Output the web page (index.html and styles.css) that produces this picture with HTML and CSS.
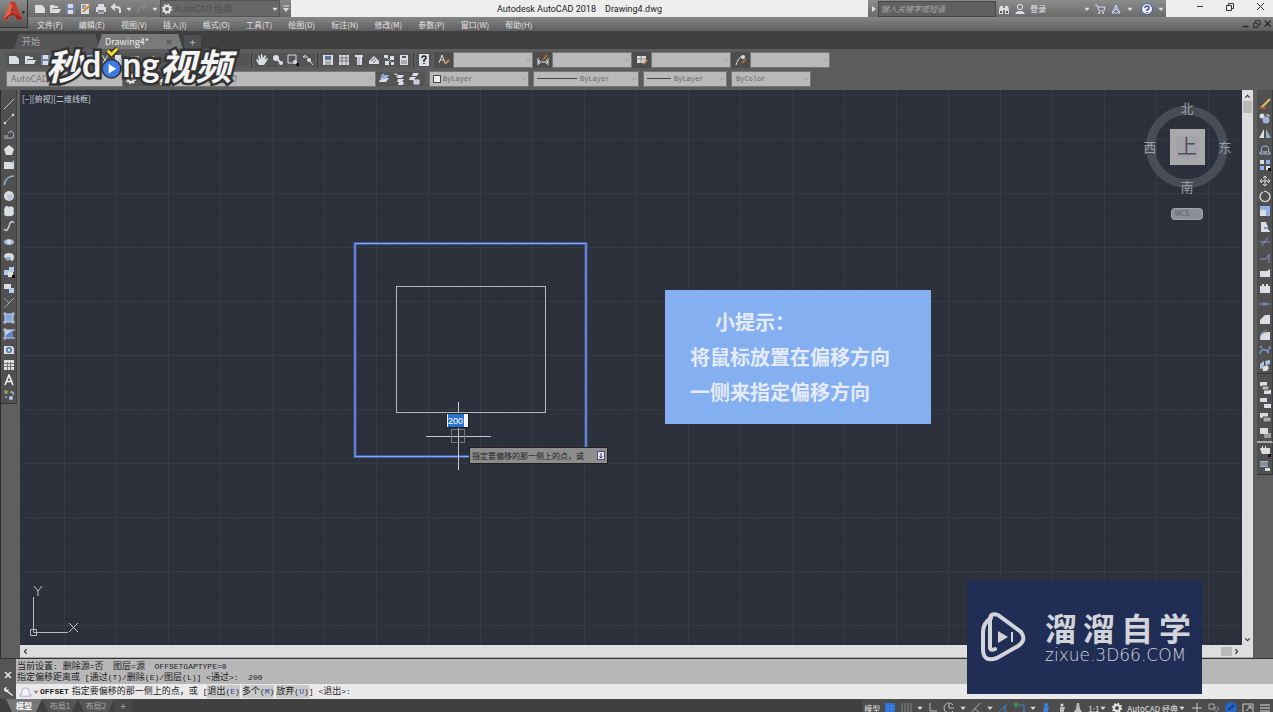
FILE: index.html
```html
<!DOCTYPE html>
<html lang="zh-CN">
<head>
<meta charset="utf-8">
<title>Autodesk AutoCAD 2018 Drawing4.dwg</title>
<link rel="stylesheet" href="styles.css">
</head>
<body>
<div class="app">
  <header class="header">
    <button class="app-button" aria-label="应用程序菜单">
      <svg viewBox="0 0 28 30"><path d="M3 21 10 2h5l8 19h-6l-2-5-6 1-2 4z" fill="#c53a2b"/><path d="m3 21 7-19 2 5-4 14z" fill="#e5624b"/><path d="m11 12 1-5 2 5z" fill="#555"/><path d="M3 21h4l2-4 6-1 2 5h6l-2-3-8-4-6 3z" fill="#9d2620"/><path d="M22 12h4l-2 3z" fill="#222"/></svg>
    </button>
    <div class="header-rows">
      <div class="titlebar">
        <div class="quick">
          <div class="icons quick-icons" data-icons="new open save saveas print undo caret redo caret"></div>
          <div class="workspace">
            <svg class="ico"><use href="#i-gear"/></svg>
            <select aria-label="工作空间"><option>AutoCAD 经典</option></select>
            <svg class="ico small"><use href="#i-caret"/></svg>
          </div>
          <div class="icons" data-icons="more"></div>
        </div>
        <h1 class="title"><span>Autodesk AutoCAD 2018</span><span>Drawing4.dwg</span></h1>
        <div class="info">
          <button class="play" aria-label="展开"><svg class="ico"><use href="#i-right"/></svg></button>
          <input class="search" type="text" placeholder="键入关键字或短语" aria-label="搜索">
          <div class="icons info-icons" data-icons="binoc user"></div>
          <button class="login">登录</button>
          <div class="icons info-icons" data-icons="caret cart cloud caret help caret"></div>
        </div>
        <div class="win">
          <button aria-label="最小化"><svg class="ico"><path d="M3 5.500h6" stroke="#333" fill="none"/></svg></button>
          <button aria-label="还原"><svg class="ico"><path d="M2.500 4.500h5v5h-5zM4.500 4V2.500h5v5H8" stroke="#333" fill="none"/></svg></button>
          <button aria-label="关闭"><svg class="ico"><path d="m3 2 7 7m0-7-7 7" stroke="#333" fill="none"/></svg></button>
        </div>
      </div>
      <nav class="menubar">
        <button>文件(F)</button><button>编辑(E)</button><button>视图(V)</button><button>插入(I)</button><button>格式(O)</button><button>工具(T)</button><button>绘图(D)</button><button>标注(N)</button><button>修改(M)</button><button>参数(P)</button><button>窗口(W)</button><button>帮助(H)</button>
        <div class="doc-win icons" data-icons="dmin drest dclose"></div>
      </nav>
    </div>
  </header>

  <div class="tabs">
    <button class="tab">开始</button>
    <button class="tab active"><span>Drawing4*</span><svg class="ico small"><use href="#i-x"/></svg></button>
    <button class="tab-add" aria-label="新图形">+</button>
  </div>

  <div class="toolbars">
    <div class="bar">
      <div class="icons std files" data-icons="new open save print preview publish cut copy paste brush undo caret redo caret"></div>
      <i class="sep"></i>
      <div class="icons std" data-icons="hand zoom zoomwin zoomprev"></div>
      <i class="sep"></i>
      <div class="icons std" data-icons="props dcenter palette sheet markup calc"></div>
      <i class="sep"></i>
      <div class="icons std" data-icons="ask"></div>
      <div class="style-set">
        <div class="icons" data-icons="textstyle"></div><span class="combo w80"><select aria-label="文字样式"><option></option></select><svg class="chev"><use href="#i-chev"/></svg></span>
        <div class="icons" data-icons="dimstyle"></div><span class="combo w80"><select aria-label="标注样式"><option></option></select><svg class="chev"><use href="#i-chev"/></svg></span>
        <div class="icons" data-icons="tabstyle"></div><span class="combo w80"><select aria-label="表格样式"><option></option></select><svg class="chev"><use href="#i-chev"/></svg></span>
        <div class="icons" data-icons="leader"></div><span class="combo w80"><select aria-label="多重引线样式"><option></option></select><svg class="chev"><use href="#i-chev"/></svg></span>
      </div>
    </div>
    <div class="bar second">
      <span class="combo w116 ws"><select aria-label="工作空间"><option>AutoCAD 经典</option></select></span>
      <div class="icons std" data-icons="gear layers layerst"></div>
      <span class="combo w206 layer"><svg class="ico"><use href="#i-bulb"/></svg><svg class="ico"><use href="#i-sun"/></svg><svg class="ico"><use href="#i-lock"/></svg><i class="swatch"></i><select aria-label="图层"><option>0</option></select><svg class="chev"><use href="#i-chev"/></svg></span>
      <div class="icons std layer-tools" data-icons="layers layerst layerprev"></div>
      <span class="combo w100"><i class="swatch"></i><select aria-label="颜色"><option>ByLayer</option></select><svg class="chev"><use href="#i-chev"/></svg></span>
      <span class="combo w106"><i class="rule long"></i><select aria-label="线型"><option>ByLayer</option></select><svg class="chev"><use href="#i-chev"/></svg></span>
      <span class="combo w84"><i class="rule"></i><select aria-label="线宽"><option>ByLayer</option></select><svg class="chev"><use href="#i-chev"/></svg></span>
      <span class="combo w80"><select aria-label="打印样式"><option>ByColor</option></select><svg class="chev"><use href="#i-chev"/></svg></span>
    </div>
  </div>

  <main class="main">
    <aside class="side left">
      <div class="vtools draw" data-icons="line xline pline polygon rect arc circle cloudrev spline ellipse earc insert block point hatch gradient region table text addsel"></div>
    </aside>
    <section class="work">
      <div class="canvas-row">
        <div class="canvas">
          <button class="view-label">[−][俯视][二维线框]</button>
          <svg class="drawing" width="640" height="400">
            <rect x="335" y="153.500" width="231" height="213" fill="none" stroke="#3d5dad" stroke-width="3"/>
            <rect x="335" y="153.500" width="231" height="213" fill="none" stroke="#91a6e6"/>
            <rect x="376.500" y="196.500" width="149" height="126" fill="none" stroke="#b4b8bf"/>
            <path d="M406 346.500h65M438.500 312v68" stroke="#c3c6cb" fill="none"/>
            <rect x="431.500" y="339.500" width="13" height="13" fill="none" stroke="#747982"/>
          </svg>
          <label class="dist"><input type="text" value="200" aria-label="偏移距离"></label>
          <div class="prompt"><span>指定要偏移的那一侧上的点，或</span><svg viewBox="0 0 8 9"><rect x=".5" y=".5" width="7" height="8" fill="#e6e8f4" stroke="#4b5078"/><path d="M4 2v5M2.500 5.500 4 7l1.500-1.500" stroke="#333860" fill="none"/></svg></div>
          <div class="hint"><p class="lead">小提示：</p><p>将鼠标放置在偏移方向</p><p>一侧来指定偏移方向</p></div>
          <svg class="cube" width="96" height="128">
            <circle cx="48" cy="51" r="36.500" fill="none" stroke="#484d58" stroke-width="9"/>
            <rect x="31" y="33" width="35" height="36" fill="#a9a9ab"/><rect x="37" y="40" width="23" height="23" fill="#a2a4a9"/>
            <text x="48" y="58" class="cube-top">上</text>
            <text x="48" y="17">北</text><text x="11" y="56">西</text><text x="86" y="56">东</text><text x="48" y="96">南</text>
            <rect x="32.500" y="112.500" width="31" height="11" rx="3" fill="#8d8f99" stroke="#a2a4ac"/>
            <text x="43" y="120" class="wcs">WCS</text>
          </svg>
          <svg class="ucs" width="64" height="56"><path d="M11.500 44V12M14 47.500h32M8.500 44.500h6v6h-6zM11.500 44v3.500H14" fill="none" stroke="#b4b8bf"/><path d="m12 1 4 5 4-5m-4 5v5M47 38l9 9m0-9-9 9" fill="none" stroke="#c3c6cb"/></svg>
        </div>
        <div class="vscroll"><svg class="arrow" viewBox="0 0 8 8"><path d="m2 5 2-2 2 2"/></svg><i class="thumb"></i><svg class="arrow end" viewBox="0 0 8 8"><path d="m2 3 2 2 2-2"/></svg></div>
      </div>
      <div class="hscroll"><svg class="arrow" viewBox="0 0 8 8"><path d="M5 2 3 4l2 2"/></svg><i class="thumb"></i><svg class="arrow" viewBox="0 0 8 8"><path d="m3 2 2 2-2 2"/></svg></div>
    </section>
    <aside class="side right">
      <div class="vtools modify" data-icons="erase copyobj mirror offset array move rotate scale stretch trim extend brk brk2 join chamfer fillet blend explode"></div>
      <div class="vtools order" data-icons="front back above under"></div>
      <div class="vtools annot" data-icons="annofront hatchback"></div>
    </aside>
  </main>

  <section class="command">
    <div class="handle"><svg class="ico"><path d="m3 3 6 6m0-6-6 6" stroke="#eee" stroke-width="1.500"/></svg><svg class="ico"><path d="M2 5a3 3 0 0 1 3-3L4 4l1 1 2-1a3 3 0 0 1-1 2l5 4-1 1-5-4a3 3 0 0 1-3-2z" fill="#eee"/></svg></div>
    <div class="console">
      <div class="history">
        <p><b>当前设置</b>: <b>删除源</b>=<b>否</b>&nbsp; <b>图层</b>=<b>源</b>&nbsp; OFFSETGAPTYPE=0</p>
        <p><b>指定偏移距离或</b> [<b>通过</b>(T)/<b>删除</b>(E)/<b>图层</b>(L)] &lt;<b>通过</b>&gt;:&nbsp; 200</p>
      </div>
      <div class="entry">
        <svg class="offset-icon" viewBox="0 0 14 12"><path d="M1 10.500h12v-2h-2v-3a4 4 0 0 0-8 0v3H1z" fill="#f8f8ff" stroke="#a3a8d8"/></svg>
        <svg class="ico small"><use href="#i-caretgray"/></svg>
        <strong>OFFSET</strong>
        <span class="ask"><b>指定要偏移的那一侧上的点，或</b> [</span>
        <button class="opt"><b>退出</b>(<em>E</em>)</button><button class="opt"><b>多个</b>(<em>M</em>)</button><button class="opt"><b>放弃</b>(<em>U</em>)</button><span>] &lt;<b>退出</b>&gt;:</span>
      </div>
    </div>
  </section>

  <footer class="status">
    <div class="layouts"><button class="layout on">模型</button><button class="layout">布局1</button><button class="layout">布局2</button><button class="layout add">+</button></div>
    <div class="modes">
      <button class="mode-text">模型</button>
      <div class="icons" data-icons="gridon grid caret ortho polar caret iso caret otrack osnap caret annovis annoauto annoscale"></div>
      <button class="mode-text">1:1<svg class="ico small"><use href="#i-caret"/></svg></button>
      <div class="icons" data-icons="gear"></div>
      <button class="mode-text">AutoCAD 经典<svg class="ico small"><use href="#i-caret"/></svg></button>
      <div class="icons extras" data-icons="plus isolate hw full burger"></div>
    </div>
  </footer>

  <div class="video-logo"><span class="han">秒</span><span class="lat">d</span><svg viewBox="0 0 22 34"><path d="M7 3l4 4 6-6" fill="none" stroke="#333" stroke-width="6"/><path d="M7 3l4 4 6-6" fill="none" stroke="#f2df2c" stroke-width="3"/><circle cx="11" cy="22" r="10.500" fill="#333"/><circle cx="11" cy="22" r="9" fill="#3c7be6"/><path d="m8 17 8 5-8 5z" fill="#fff"/></svg><span class="lat">ng</span><span class="han">视频</span></div>

  <div class="site-logo">
    <svg viewBox="0 0 48 50"><path d="M11 6q-8 5-8 14v17q0 14 14 9l21-12q9-6 3-14L18 3q-8-3-8 5v28q1 3 5 1" fill="none" stroke="#d3d4da" stroke-width="4" stroke-linecap="round"/><path d="m18 19 10 6-10 6z" fill="#d3d4da"/><path d="M32 20v10" stroke="#d3d4da" stroke-width="2"/></svg>
    <div class="site-name"><div class="site-han"><span>溜</span><span>溜</span><span>自</span><span>学</span></div><div class="site-url">zixue.3D66.COM</div></div>
  </div>
</div>
<script src="script.js"></script>
</body>
</html>
```

FILE: styles.css
```css
* { box-sizing: border-box; }
body { margin: 0; background: #5b5b5b; font-family: "Noto Sans CJK SC", "Open Sans", sans-serif; font-size: 8px; color: #ddd; }
button, select, input { font: inherit; color: inherit; background: none; border: 0; padding: 0; margin: 0; border-radius: 0; outline: 0; }
select { appearance: none; }
h1 { font-weight: normal; }
p, h1 { margin: 0; }
b, em { font-style: normal; font-weight: normal; }
.app { position: relative; display: flex; flex-direction: column; height: 100vh; overflow: hidden; }
.ico { display: block; width: 12px; height: 12px; flex: none; }
.ico.small { width: 8px; height: 8px; }
.icons { display: flex; align-items: center; }
.icons button { display: flex; align-items: center; justify-content: center; width: 16px; height: 14px; }
.icons .i-caret { width: 11px; }
.icons .i-caret svg { width: 8px; height: 8px; }

/* title and menus */
.header { display: flex; flex: none; height: 31px; background: #666; }
.app-button { width: 28px; height: 28px; background: linear-gradient(#8c8c8c, #555); border-right: 1px solid #333; border-bottom: 1px solid #333; }
.app-button svg { display: block; width: 28px; height: 28px; }
.header-rows { flex: 1; display: flex; flex-direction: column; min-width: 0; }
.titlebar { display: flex; height: 17px; background: #ededed; }
.quick { display: flex; align-items: center; background: linear-gradient(#868686, #696969); padding-left: 4px; width: 263px; }
.quick-icons { width: 128px; }
.workspace { display: flex; align-items: center; width: 120px; height: 17px; background: #686868; color: #505050; border: 1px solid #555; gap: 2px; }
.workspace select { flex: 1; font-size: 9px; }
.quick .icons:last-child button { width: 11px; }
.title { flex: 1; display: flex; justify-content: center; align-items: center; gap: 9px; font-family: Roboto, sans-serif; font-size: 9px; color: #222; }
.info { display: flex; align-items: center; width: 298px; background: linear-gradient(#8c8c8c, #6a6a6a); }
.play { width: 10px; }
.search { width: 120px; height: 16px; background: #606060; border: 1px solid #484848; padding-left: 2px; }
.search::placeholder { color: #a5a5a5; opacity: 1; font-style: italic; }
.login { color: #e8e8e8; width: 20px; margin-right: 33px; }
.info-icons .i-help { margin-left: 4px; }
.win { display: flex; align-items: center; justify-content: space-between; width: 107px; padding: 0 7px 4px 28px; }
.menubar { display: flex; align-items: center; gap: 16px; height: 14px; padding-left: 9px; background: linear-gradient(#858585, #5e5e5e); color: #e3e3e3; }
.menubar > button { white-space: nowrap; }
.doc-win { margin-left: auto; }
.doc-win button { width: 11px; }
.doc-win svg { width: 10px; height: 10px; }

/* document tabs */
.tabs { display: flex; align-items: flex-end; flex: none; height: 18px; background: #404040; padding-left: 14px; font-size: 9px; }
.tab { display: flex; align-items: center; justify-content: space-between; width: 86px; height: 15px; padding: 0 10px 0 8px; background: #555; color: #aaa; clip-path: polygon(5px 0, 81px 0, 86px 100%, 0 100%); }
.tab.active { background: #7a7a7a; color: #eee; margin-left: -3px; }
.tab-add { width: 17px; height: 14px; margin-left: 1px; background: #505050; border-radius: 3px; color: #bbb; font-size: 11px; line-height: 12px; }

/* toolbars */
.toolbars { flex: none; height: 41px; padding-top: 2px; background: #5c5c5c; }
.bar { display: flex; align-items: center; height: 18px; padding-left: 6px; }
.bar.second { height: 19px; }
.std { background: #545454; }
.std button { width: 15px; }
.std .i-new, .std .i-hand, .std .i-props { width: 16px; }
.files { width: 243px; }
.files .i-undo { margin-left: 22px; }
.sep { width: 1px; height: 15px; background: #393939; margin: 0 2px; }
.style-set { display: flex; align-items: center; margin-left: 3px; }
.style-set .icons button { width: 19px; height: 16px; background: #4d4d4d; }
.combo { display: flex; align-items: center; flex: none; height: 16px; background: #b9b9b9; border: 1px solid #777; color: #666; padding-left: 2px; font-family: "Liberation Mono", monospace; font-size: 7px; }
.combo select { flex: 1; min-width: 0; height: 14px; padding-left: 2px; }
.combo + .combo { margin-left: 4px; }
.w80 { width: 80px; }
.w84 { width: 84px; }
.w100 { width: 100px; }
.w106 { width: 106px; }
.w116 { width: 117px; }
.w206 { width: 206px; margin-left: 2px; }
.ws, .layer { font-family: "Noto Sans CJK SC", sans-serif; font-size: 9px; color: #777; }
.layer { padding-left: 6px; gap: 2px; }
.chev { width: 8px; height: 8px; flex: none; }
.swatch { width: 8px; height: 8px; background: #eee; border: 1px solid #444; flex: none; margin-left: 1px; }
.rule { width: 24px; height: 1px; background: #444; margin: 0 1px; flex: none; }
.rule.long { width: 40px; }
.layer-tools { padding: 0 4px 0 0; margin-right: 4px; }

/* work area */
.main { flex: 1; display: flex; min-height: 0; }
.side { flex: none; background: #5f5f5f; }
.left { width: 20px; border-left: 1px solid #2d2d2d; }
.right { width: 20px; padding-left: 4px; }
.vtools { display: flex; flex-direction: column; width: 16px; background: #505050; border-right: 1px solid #3d3d3d; }
.vtools button { flex: 1; display: flex; align-items: center; justify-content: center; min-height: 0; }
.draw { height: 314px; padding-top: 6px; border-bottom: 1px solid #333; }
.modify { height: 284px; padding-top: 6px; border-bottom: 1px solid #333; }
.order { height: 69px; padding-top: 6px; border-bottom: 2px solid #aaa; }
.annot { height: 32px; border-bottom: 1px solid #333; }
.work { flex: 1; display: flex; flex-direction: column; min-width: 0; }
.canvas-row { flex: 1; display: flex; min-height: 0; }
.canvas {
  position: relative; flex: 1; overflow: hidden; background-color: #2b303b;
  background-image: linear-gradient(90deg, #363b46 1px, transparent 1px), linear-gradient(#363b46 1px, transparent 1px), linear-gradient(90deg, #2e333e 1px, transparent 1px), linear-gradient(#2e333e 1px, transparent 1px);
  background-size: 52px 54px, 52px 54px, 10px 11px, 10px 11px;
  background-position: 44px 49px, 44px 49px, 4px 5px, 4px 5px;
}
.view-label { position: absolute; left: 2px; top: 3px; color: #d2d5da; }
.drawing { position: absolute; left: 0; top: 0; }
.dist { position: absolute; left: 426px; top: 323px; width: 23px; height: 15px; background: #f5f5f5; border: 1px solid #222; }
.dist input { display: block; width: 16px; height: 13px; margin-left: 1px; background: #2a74d0; color: #fff; font: 9px "Liberation Sans", sans-serif; }
.prompt { position: absolute; left: 449px; top: 357px; display: flex; align-items: center; justify-content: space-between; width: 139px; height: 17px; padding: 0 2px; background: #8d8d8d; border: 1px solid #222; color: #222; white-space: nowrap; }
.prompt svg { width: 8px; height: 9px; }
.hint { position: absolute; left: 645px; top: 200px; width: 266px; height: 134px; padding: 14px 0 0 25px; background: #84aff1; color: #e4ecfa; font-size: 20px; line-height: 35px; font-weight: bold; white-space: nowrap; }
.hint .lead { padding-left: 25px; }
.cube { position: absolute; right: 7px; top: 6px; }
.cube text { fill: #9a9da5; font-size: 13px; text-anchor: middle; }
.cube .cube-top { fill: #4c505a; font-size: 20px; }
.cube .wcs { fill: #595c68; font-size: 7px; }
.ucs { position: absolute; left: 2px; bottom: 4px; }
.arrow { width: 9px; height: 9px; fill: none; stroke: #333; flex: none; }
.vscroll { display: flex; flex-direction: column; align-items: center; width: 11px; background: #dedede; padding: 2px 0 1px; }
.vscroll .thumb { width: 9px; height: 12px; background: #b9b9b9; }
.end { margin-top: auto; }
.hscroll { display: flex; align-items: center; flex: none; height: 13px; background: #dedede; padding: 0 12px 0 1px; border-bottom: 1px solid #aaa; }
.hscroll .thumb { width: 11px; height: 9px; margin-left: auto; background: #b9b9b9; }

/* command window */
.command { display: flex; flex: none; height: 41px; border-top: 1px solid #333; }
.handle { display: flex; flex-direction: column; justify-content: flex-end; align-items: center; gap: 4px; width: 16px; padding-bottom: 2px; background: #555; }
.console { flex: 1; background: #eaeaea; color: #222; font-family: "Liberation Mono", monospace; font-size: 8px; white-space: nowrap; }
.console b { font-family: "Noto Sans CJK SC", sans-serif; font-size: 9px; line-height: 11px; }
.history { height: 25px; padding: 1px; background: #b7b7b7; }
.history p { height: 11px; line-height: 11px; }
.entry { display: flex; align-items: center; height: 15px; padding-left: 3px; line-height: 13px; }
.offset-icon { width: 13px; height: 12px; }
.entry strong { margin: 0 3px 0 0; }
.opt { height: 13px; background: #c9c9c9; margin-right: 2px; }
.opt:last-of-type { margin-right: 0; }
.opt em { color: #3438b5; }

/* status bar */
.status { display: flex; justify-content: space-between; flex: none; height: 13px; overflow: hidden; background: #404040; }
.layouts { display: flex; padding-left: 6px; color: #aaa; }
.layout { width: 36px; height: 13px; line-height: 13px; background: #555; clip-path: polygon(0 0, 100% 0, 30px 100%, 6px 100%); }
.layout.on { background: #777; color: #fff; font-weight: bold; }
.layout.add { width: 18px; font-size: 10px; clip-path: none; background: #484848; }
.modes { display: flex; align-items: flex-start; padding-top: 2px; background: #4c4c4c; color: #e0e0e0; }
.mode-text { display: flex; align-items: center; height: 14px; padding: 0 2px; white-space: nowrap; }
.extras button { width: 17px; }

/* overlays */
.video-logo { position: absolute; left: 46px; top: 42px; display: flex; align-items: center; height: 44px; color: #f4f4f4; font-weight: bold; paint-order: stroke; -webkit-text-stroke: 5px #333; pointer-events: none; }
.video-logo .han { font-size: 36px; line-height: 40px; font-style: italic; }
.video-logo .lat { font-family: Lato, sans-serif; font-size: 34px; line-height: 44px; }
.video-logo svg { width: 21px; height: 34px; }
.site-logo { position: absolute; right: 71px; bottom: 18px; display: flex; align-items: center; gap: 17px; width: 235px; height: 114px; padding-left: 13px; background: #202e55; color: #d3d4da; }
.site-logo svg { width: 48px; height: 50px; }
.site-han { display: flex; gap: 6px; font-size: 32px; line-height: 36px; font-weight: bold; }
.site-url { font-family: "DejaVu Sans", sans-serif; font-weight: 200; font-size: 17px; line-height: 20px; }
```

FILE: script.js
```js
const W = '#dcdde2', B = '#8fb0e8';
const p = (d, c = W, w = 1) => `<path d="${d}" fill="none" stroke="${c}" stroke-width="${w}"/>`;
const f = (d, c = W) => `<path d="${d}" fill="${c}"/>`;
const o = (x, y, r, c = W) => `<circle cx="${x}" cy="${y}" r="${r}" fill="${c}"/>`;

const icons = {
  caret: f('M2 4h8l-4 5z'), caretgray: f('M2 4h8l-4 5z', '#8a8a8a'), chev: p('m3 4 3 3 3-3', '#8a8a8a'), x: p('m3 3 6 6m0-6-6 6', '#555', 2),
  right: f('M4 3v6l4-3z'), more: p('M3 3h6') + f('M3 5h6L6 9z'),
  new: f('M1 2h7l3 3v5H1z'), open: f('M1 2h4l1 1h3v2H4l-2 5H1zM4 6h8l-2 4H2z'),
  save: f('M2 1h9v10H2z', '#7388ad') + f('M4 1h5v4H4zM4 7h5v4H4z'),
  saveas: f('M2 1h8v10H2z') + p('m4 9 7-7', '#ce8b3d', 2) + p('M3 3h4M3 5h3', '#555'),
  print: f('M3 1h6v3H3zM1 4h10v5H1z') + f('M3 7h6v4H3z', '#aab') + p('M3 8h6', '#555'),
  undo: p('M10 10V7q0-3-4-3H2m3-3L2 4l3 3', W, 2), redo: p('M2 10V7q0-3 4-3h4M7 1l3 3-3 3', '#8b8b8b', 1),
  gear: '<circle cx="6" cy="6" r="3" fill="none" stroke="#e4e4e4" stroke-width="2"/><circle cx="6" cy="6" r="4.500" fill="none" stroke="#e4e4e4" stroke-width="1.500" stroke-dasharray="1.700 1.830"/>',
  binoc: f('M2 3h3v8H1V7zM7 3h3l1 4v4H7zM5 5h2v2H5z') + f('M2 8h2v2H2zM8 8h2v2H8z', '#555'),
  user: o(6, 4, 3) + o(6, 4, 2, '#777') + f('M1 11q1-3 5-3t5 3z'),
  cart: p('M1 2h2l2 6h5l1-4H4', '#ced2fa') + o(5, 10, 1, W) + o(9, 10, 1, W),
  cloud: p('m6 2 4 8H2zM6 2v4m4 4L6 6 2 10', '#ced2fa'),
  help: o(6, 6, 6, '#4860aa') + o(6, 6, 5, '#eef') + p('M4 5q0-2 2-2t2 2q0 1-2 2v1m0 1v1', '#3a4fa0', 1.5),
  dmin: p('M2 9h7', '#222', 1.5), drest: p('M2 5h5v5H2zM4 4V2h6v5H8', '#222'), dclose: p('m2 2 7 7m0-7-7 7', '#222', 1.5),
  preview: f('M1 1h7v9H1z') + p('m7 7 4 4', W, 2), publish: f('M1 4h10v6H1z') + f('M3 1h6v3H3z', B),
  cut: p('m3 1 5 8m1-8L4 9'), copy: f('M1 1h6v7H1z') + f('M5 4h6v7H5z', '#b7c4e0'), paste: f('M2 2h8v9H2z', '#b89b6b') + f('M4 4h6v6H4z'), brush: p('m2 10 8-8', '#ce8b3d', 2),
  hand: f('M3 11 0 6l1-1 2 2-1-5 1-1 2 4V0h1l1 4 2-3 1 1-1 4 2-2 1 1-4 6z'),
  zoom: o(4, 4, 3) + p('m6 6 4 4', W, 2) + o(9, 9, 2), zoomwin: p('M1 1h8v8H1z') + o(8, 8, 2) + f('M10 9h2v3H9z', '#111'),
  zoomprev: p('m1 3 3-2M1 3h5') + o(7, 6, 2) + p('m8 7 3 4'),
  props: f('M1 1h10v10H1z') + f('M3 2h6v4H3z', '#58729b') + p('M3 8h6M3 10h6', '#777'),
  dcenter: f('M1 1h10v10H1z') + p('M1 4h10M1 7h10M4 1v10M8 1v10', '#777'),
  palette: f('M2 1h8v2H9v8H4V3H2z') + p('M6 3v8', '#999'), sheet: f('m1 7 5-5 5 5v3H1z') + p('m3 7 4-3m-2 5 3-3', '#666'),
  markup: f('M1 1h4v3H1zM7 2h4v4H7zM2 7h4v4H2zM8 8h3v3H8z') + p('m4 4 4 4', B), calc: f('M2 1h8v10H2z') + p('M4 3h4', '#555', 2) + p('M4 6v4M6 6v4M8 6v4', '#777'),
  ask: f('M1 0h10v12H1z') + p('M4 4q0-2 2-2t2 2q0 1-2 2v2m0 1v1', '#222', 1.5),
  textstyle: p('m1 9 3-8 3 8M2 6h4') + p('m7 10 4-4', '#cf8f4b', 2), dimstyle: p('M1 4v7M11 4v7M1 8h10M3 6 1 8l2 2m6-4 2 2-2 2') + p('m6 6 4-5', '#b26b2b', 2),
  tabstyle: f('M1 2h9v7H1z') + p('M1 5h9M5 2v7', '#888') + p('m7 10 4-4', '#cf8f4b', 2), leader: p('M1 11q3-9 6-8') + o(8, 3, 2) + p('m7 9 4-4', '#b26b2b', 2),
  layers: f('m1 8 4-3h6l-3 4H1z') + f('m2 5 4-3h5L8 6H2z', B) + p('m3 3 3-2'),
  layerst: f('M5 2h6L9 5H4zM5 6h6L9 9H4zM6 9h5l-1 3H5z') + p('M1 1h3v3'), layerprev: f('M5 0h6L9 3H4zM2 4h6L6 7H1z') + f('M6 7h5v4H6z', '#cbd') + p('M6 7h5v4H6z'),
  bulb: o(6, 5, 3, '#a09a70'), sun: o(6, 6, 3, '#aaa172'), lock: f('M3 5h6v5H3z', '#a59555') + p('M4 5V3h4v2', '#777'),
  line: p('m1 11 10-10', '#b8bcc8'), xline: p('m2 10 8-8', '#8d93a0') + o(2, 10, 1.2) + o(10, 2, 1.2), pline: p('M1 10h9q2-5-2-7L5 5M1 8h4', '#abb6ce'),
  polygon: f('m6 1 5 4-2 6H3L1 5z'), rect: f('M1 3h10v7H1z') + p('m9 4 2-2', B, 2), arc: p('M1 11Q3 2 11 2', '#93add8', 1.5), circle: o(6, 6, 5) + o(7, 7, 3, '#bcc5dc'),
  cloudrev: f('M2 2q2-2 4 0 4-2 5 2-1 2 0 4-1 4-5 3-4 1-5-2 1-2 0-4z'), spline: p('M1 9q3 4 5-3t5-3', '#c4cad8', 1.5),
  ellipse: '<ellipse cx="6" cy="6" rx="5" ry="3" fill="#a9bdd8"/>' + o(6, 6, 2), earc: f('M1 6q0-4 5-4t5 4-3 4l-1-3-2 3z') + f('M3 6h5v3H3z', '#91abcd'),
  insert: f('M1 4h5v5H1zM6 1h5v5H6z', '#b7cbed') + f('M5 6h5v5H5z') + f('M9 9h3v3H9z', '#111'), block: f('M1 2h7v5H1z') + f('M6 6h5v5H6z', '#b7cbed'),
  point: p('M1 1 6 6l5-5M6 6l-5 5', '#a0a4ad'),
  hatch: f('M2 2h8v8H2z', '#86a5dd') + p('M0 2h12M0 10h12M2 0v12M10 0v12', '#cad5ee'), gradient: f('M2 2h8v8H2z', '#5e81c6') + f('M2 2h8L2 8z', '#b7cbed') + p('M0 2h12M0 10h12M2 0v12', '#cad5ee'),
  region: f('M1 3h8l2 2v6H1z') + o(6, 7, 3, '#4f70a8') + o(6, 7, 1.5), table: f('M1 1h10v10H1z') + p('M1 4.500h10M1 7.500h10M4.500 3v8M7.500 3v8', '#777'),
  text: p('m2 11 4-10 4 10M3.500 7.500h5', '#f1f1f1', 1.6), addsel: o(3, 3, 2, '#8ea052') + p('M7 3h3v3', W) + o(8, 9, 2, '#b9caed') + o(3, 8, 1, B),
  erase: p('m2 10 9-9', '#e4bd68', 2) + p('M1 10h6', '#a95d30', 2), copyobj: o(3, 3, 2.5) + o(7, 7, 3.5, '#9db4e0') + p('M7 2h3v2'),
  mirror: f('M5 1v9H0z') + f('M7 1v9h5z', '#9ba9c8'), offset: p('M1 10h10V8H9q2-6-3-6T3 8H1z', '#a7b7e3') + p('M4 8h4', W),
  array: f('M1 1h4v4H1zM7 7h4v4H7z') + f('M7 1h4v4H7zM1 7h4v4H1z', B) + f('M9 9h3v3H9z', '#111'), move: p('M6 1v10M1 6h10M4 3l2-2 2 2M4 9l2 2 2-2M3 4 1 6l2 2m6-4 2 2-2 2'),
  rotate: p('M8 2a5 5 0 1 1-4 0M8 2l-3-1', W, 1.3), scale: f('M1 1h10v10H1z', B) + f('M1 5h6v6H1z'), stretch: f('M2 1h5l4 10H2z') + p('M5 7h6M9 5l2 2-2 2', '#384e7d'),
  trim: p('M1 6h10M3 10l6-9', '#8392c9'), extend: p('M1 7h6l3-5m0 0v9', '#8392c9'), brk: f('M1 4h7l3-2v8H1z'), brk2: f('M1 4h2V2h2v2h2V2h2v2h2v7H1z'), join: p('M0 6h12M4 4l2 2-2 2m4-4L6 6l2 2', '#8392d9'),
  chamfer: f('m1 7 5-5h5v9H1z'), fillet: f('M1 11q0-8 7-8h3v8z') + p('M1 8q1-6 7-7', '#8392b9'), blend: p('M1 10q1-6 5-4t5-4', '#7898cb', 1.5) + o(2, 3, 1, B) + o(9, 8, 1, B),
  explode: f('M1 5l4-3v4l-3 4H1zM6 2l5-1v4L7 6z', '#adc5ea') + f('M3 8l5-2 2 3-2 3H4z'),
  front: f('M1 0h7v4H1zM5 8h7v4H5z') + f('M3 4h7v4H3z', '#bbb') + p('M3 4h7v4H3z', '#444'), back: f('M1 1h7v4H1zM5 7h7v4H5z'), above: f('M1 1h8v5H1z') + f('M4 5h8v5H4z', '#aaa') + p('M4 5h8v5H4z', '#444'), under: f('M5 6h7v5H5z', '#999') + f('M1 1h8v6H1z'),
  annofront: f('M1 3h2V1h1v2h2V1h1v2h4v6H3z') + f('M9 9h3v3H9z', '#111'), hatchback: f('M1 1h8v6H1z', '#a7b1ca') + f('M6 8h5v3H6z') + p('M1 3h8M1 5h8', '#667'),
  gridon: f('M1 1h10v11H1z', '#2d6fd4') + p('M1 4h10M1 7h10M4 1v11M8 1v11', '#5592ea', .5), grid: p('M2 1v11M5 1v11M8 1v11M11 1v11', '#888'),
  ortho: p('M3 1v8h7', '#bbb'), polar: p('M6 6h5M6 6V2', '#bbb') + p('M10 9a5 5 0 1 1 0-6', '#bbb'), iso: p('m1 11 9-10M4 6l6 5', '#aaa'), otrack: p('m1 11 9-9M8 4v7', '#3c84e4'),
  osnap: p('M3 3h8v9', '#3c84e4') + f('M1 1h4v4H1z', '#3e8d4c'), annovis: o(6, 3, 2, '#3c84e4') + f('M4 5h5l-2 7H3z', '#3c84e4'), annoauto: o(6, 3, 1.5) + f('M4 5h5l-2 7H4z', '#bbb'), annoscale: f('M5 1h2l1 6 3 4H1l3-4z', '#bbb'),
  plus: p('M6 1v10M1 6h10', '#ccc'), isolate: p('M1 2h5v5H1z', '#aaa') + p('M8 5a2 2 0 1 0 1 0', '#aaa'), hw: o(6, 6, 6, '#2466ca') + p('m3 8 6-5', '#183c83', 2), full: p('M1 2h10v9H1zM6 4h3v3M9 4 4 9', '#ccc'), burger: p('M1 3h10M1 6h10M1 9h10', '#ddd')
};

const sprite = Object.entries(icons).map(([k, v]) => `<symbol id="i-${k}" viewBox="0 0 12 12">${v}</symbol>`).join('');
document.body.insertAdjacentHTML('afterbegin', `<svg width="0" height="0" style="display:none">${sprite}</svg>`);
document.querySelectorAll('[data-icons]').forEach(el => {
  el.innerHTML = el.dataset.icons.split(' ').map(k => `<button class="i-${k}" aria-label="${k}"><svg class="ico"><use href="#i-${k}"/></svg></button>`).join('');
});
```
